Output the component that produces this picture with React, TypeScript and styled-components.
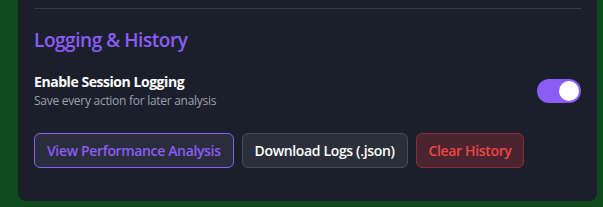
import React, { useState } from 'react';
import styled, { createGlobalStyle } from 'styled-components';

const GlobalStyle = createGlobalStyle`
  html, body {
    margin: 0;
    padding: 0;
    background: #0e4a1b;
  }
  body {
    font-family: 'Open Sans', 'Noto Sans', sans-serif;
  }
`;

const Page = styled.div`
  padding: 0 6px 6px 18px;
  min-height: 207px;
  box-sizing: border-box;
`;

const Panel = styled.div`
  background: #1b1f2b;
  border-radius: 0 0 8px 8px;
  padding: 8px 16px 0;
  height: 201px;
  box-sizing: border-box;
`;

const Section = styled.section`
  border-top: 1px solid #363b48;
  padding-top: 17px;
`;

const Heading = styled.h3`
  margin: 0 0 18px;
  font-size: 19px;
  line-height: 28px;
  font-weight: 600;
  color: #8b5cf6;
  letter-spacing: -0.45px;
`;

const SettingRow = styled.div`
  display: flex;
  align-items: center;
  justify-content: space-between;
`;

const SettingText = styled.div`
  display: flex;
  flex-direction: column;
  gap: 1px;
`;

const SettingLabel = styled.span`
  font-size: 14px;
  line-height: 20px;
  font-weight: 700;
  color: #ffffff;
  letter-spacing: -0.45px;
`;

const SettingHint = styled.span`
  font-size: 12px;
  line-height: 16px;
  color: #9aa0ad;
  letter-spacing: -0.28px;
`;

const Switch = styled.button<{ $on: boolean }>`
  width: 44px;
  height: 24px;
  border: none;
  border-radius: 12px;
  padding: 2px;
  background: ${(p) => (p.$on ? '#8b5cf6' : '#4b5060')};
  display: flex;
  justify-content: ${(p) => (p.$on ? 'flex-end' : 'flex-start')};
  cursor: pointer;
`;

const Knob = styled.span`
  width: 20px;
  height: 20px;
  border-radius: 50%;
  background: #ffffff;
`;

const Actions = styled.div`
  display: flex;
  gap: 8px;
  margin-top: 24px;
`;

type Tone = 'accent' | 'neutral' | 'danger';

const tones: Record<Tone, { bg: string; border: string; color: string }> = {
  accent: { bg: '#2a2d3b', border: '#8b5cf6', color: '#8b5cf6' },
  neutral: { bg: '#2a2f3a', border: '#474c58', color: '#ffffff' },
  danger: { bg: '#4a2530', border: '#8a2d36', color: '#ef4444' },
};

const ActionButton = styled.button<{ $tone: Tone }>`
  height: 35px;
  padding: 0 12px;
  border-radius: 6px;
  font-family: inherit;
  font-size: 14px;
  font-weight: 600;
  letter-spacing: -0.35px;
  background: ${(p) => tones[p.$tone].bg};
  border: 1px solid ${(p) => tones[p.$tone].border};
  color: ${(p) => tones[p.$tone].color};
  cursor: pointer;
`;

export default function App() {
  const [logging, setLogging] = useState(true);

  return (
    <>
      <GlobalStyle />
      <Page>
        <Panel>
          <Section>
            <Heading>Logging &amp; History</Heading>
            <SettingRow>
              <SettingText>
                <SettingLabel>Enable Session Logging</SettingLabel>
                <SettingHint>Save every action for later analysis</SettingHint>
              </SettingText>
              <Switch $on={logging} onClick={() => setLogging(!logging)}>
                <Knob />
              </Switch>
            </SettingRow>
            <Actions>
              <ActionButton $tone="accent">View Performance Analysis</ActionButton>
              <ActionButton $tone="neutral">Download Logs (.json)</ActionButton>
              <ActionButton $tone="danger">Clear History</ActionButton>
            </Actions>
          </Section>
        </Panel>
      </Page>
    </>
  );
}
